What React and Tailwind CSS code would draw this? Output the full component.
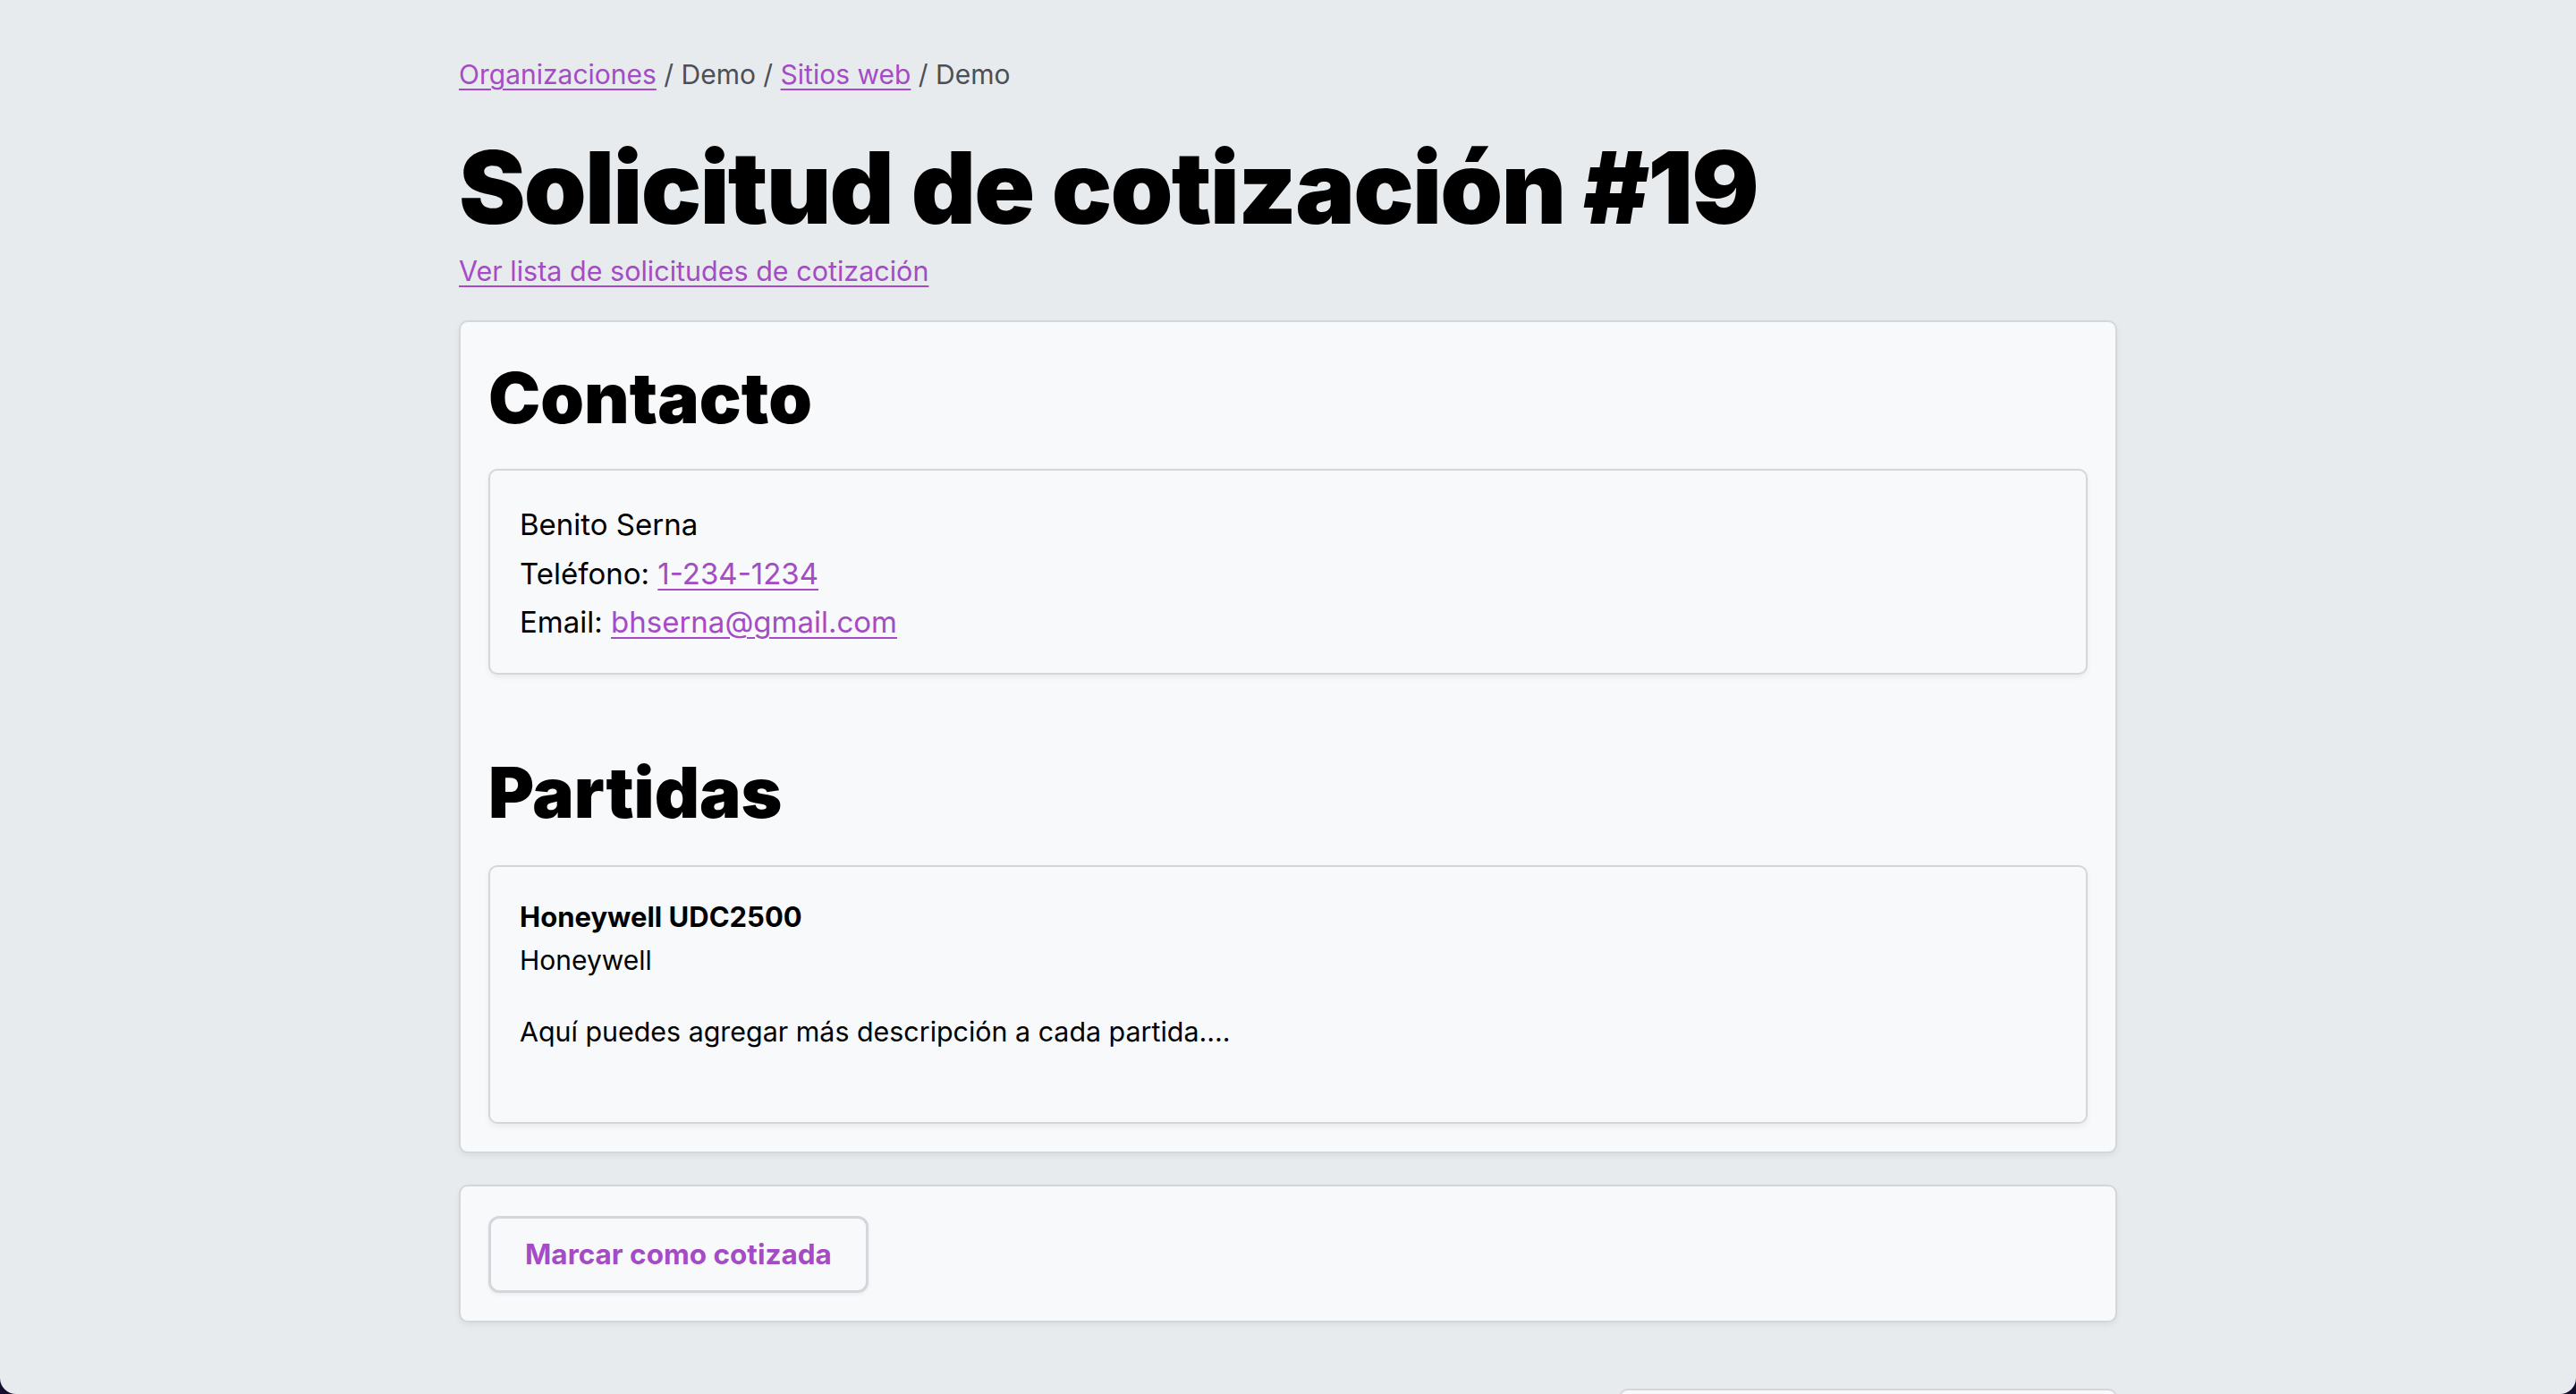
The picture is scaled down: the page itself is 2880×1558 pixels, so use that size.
import React from 'react';

const link = 'text-[#a44bc5] underline underline-offset-[5px] decoration-[2px]';

const Box = ({ children, className = '' }) => (
  <div className={`rounded-[10px] border-2 border-[#d3d7dc] bg-[#f8f9fb] shadow-[0_3px_6px_rgba(0,0,0,0.06)] ${className}`}>
    {children}
  </div>
);

export default function App() {
  return (
    <div className="bg-[#160c2e]" style={{ fontFamily: 'Inter, "Noto Sans", sans-serif' }}>
      <div className="h-[1558px] overflow-hidden rounded-b-[18px] bg-[#e8ebee] text-black">
        <div className="mx-auto w-[1854px] pt-[63px]">
          {/* Breadcrumb */}
          <p className="text-[30px] leading-[40px] text-[#4b4f57]">
            <a href="#" className={link}>Organizaciones</a> / Demo /{' '}
            <a href="#" className={link}>Sitios web</a> / Demo
          </p>

          <h1 className="mt-[50px] text-[112px] font-black leading-[112px] tracking-[-1.8px]">
            Solicitud de cotización #19
          </h1>
          <a href="#" className={`${link} mt-[18px] block text-[30.5px] leading-[40px]`}>
            Ver lista de solicitudes de cotización
          </a>

          {/* Main card */}
          <Box className="mt-[35px] px-[31px] pt-[46px] pb-[31px]">
            <h2 className="text-[78px] font-black leading-[78px]">Contacto</h2>
            <Box className="mt-[40px] px-[33px] pt-[33px] pb-[29px] text-[33px] leading-[54.5px]">
              <p>Benito Serna</p>
              <p>
                Teléfono: <a href="#" className={link}>1-234-1234</a>
              </p>
              <p>
                Email: <a href="#" className={link}>bhserna@gmail.com</a>
              </p>
            </Box>

            <h2 className="mt-[93px] text-[78px] font-black leading-[78px]">Partidas</h2>
            <Box className="mt-[42px] px-[33px] pt-[32px] pb-[77px] text-[30px] leading-[48px]">
              <p className="text-[31px] font-bold">Honeywell UDC2500</p>
              <p>Honeywell</p>
              <p className="mt-[32px] text-[30.4px]">Aquí puedes agregar más descripción a cada partida....</p>
            </Box>
          </Box>

          {/* Actions */}
          <Box className="mt-[35px] px-[31px] pt-[33px] pb-[31px]">
            <button className="h-[86px] rounded-[12px] border-[3px] border-[#d3d7dc] bg-[#f8f9fb] px-[38px] text-[31.5px] font-bold text-[#a44bc5] shadow-[0_2px_4px_rgba(0,0,0,0.05)]">
              Marcar como cotizada
            </button>
          </Box>

          <div className="mt-[74px] ml-auto h-[40px] w-[557px] rounded-t-[10px] border-2 border-[#d3d7dc] bg-[#f8f9fb]" />
        </div>
      </div>
    </div>
  );
}
